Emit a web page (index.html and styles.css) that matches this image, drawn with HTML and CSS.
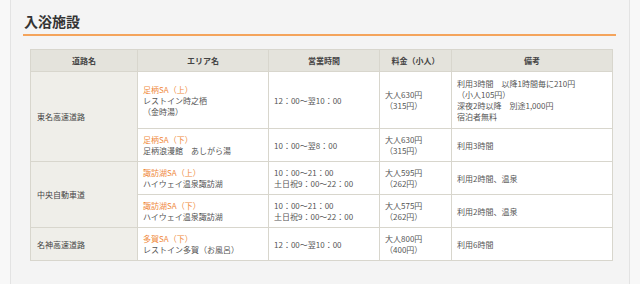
FILE: index.html
```html
<!DOCTYPE html>
<html lang="ja">
<head>
<meta charset="utf-8">
<title>入浴施設</title>
<link rel="stylesheet" href="styles.css">
</head>
<body>
<div class="page">
  <section class="panel">
    <h2 class="title">入浴施設</h2>
    <div class="table-wrap">
      <table class="bath">
        <colgroup>
          <col class="c-road">
          <col class="c-area">
          <col class="c-hours">
          <col class="c-fee">
          <col class="c-note">
        </colgroup>
        <thead>
          <tr><th>道路名</th><th>エリア名</th><th>営業時間</th><th>料金（小人）</th><th>備考</th></tr>
        </thead>
        <tbody>
          <tr class="tall">
            <th class="road" rowspan="2">東名高速道路</th>
            <td><span class="sa">足柄SA（上）</span><br>レストイン時之栖<br>（金時湯）</td>
            <td>12：00〜翌10：00</td>
            <td>大人630円<br>（315円）</td>
            <td>利用3時間　以降1時間毎に210円<br>（小人105円）<br>深夜2時以降　別途1,000円<br>宿泊者無料</td>
          </tr>
          <tr>
            <td><span class="sa">足柄SA（下）</span><br>足柄浪漫館　あしがら湯</td>
            <td>10：00〜翌8：00</td>
            <td>大人630円<br>（315円）</td>
            <td>利用3時間</td>
          </tr>
          <tr>
            <th class="road" rowspan="2">中央自動車道</th>
            <td><span class="sa">諏訪湖SA（上）</span><br>ハイウェイ温泉諏訪湖</td>
            <td>10：00〜21：00<br>土日祝9：00〜22：00</td>
            <td>大人595円<br>（262円）</td>
            <td>利用2時間、温泉</td>
          </tr>
          <tr>
            <td><span class="sa">諏訪湖SA（下）</span><br>ハイウェイ温泉諏訪湖</td>
            <td>10：00〜21：00<br>土日祝9：00〜22：00</td>
            <td>大人575円<br>（262円）</td>
            <td>利用2時間、温泉</td>
          </tr>
          <tr>
            <th class="road">名神高速道路</th>
            <td><span class="sa">多賀SA（下）</span><br>レストイン多賀（お風呂）</td>
            <td>12：00〜翌10：00</td>
            <td>大人800円<br>（400円）</td>
            <td>利用6時間</td>
          </tr>
        </tbody>
      </table>
    </div>
  </section>
</div>
</body>
</html>
```

FILE: styles.css
```css
html, body {
  margin: 0;
  padding: 0;
}

body {
  background: #f8f8f8;
  font-family: "Noto Sans CJK JP", "Liberation Sans", sans-serif;
  color: #555;
}

.page {
  min-height: 284px;
}

.panel {
  box-sizing: border-box;
  width: 620px;
  min-height: 284px;
  margin-left: 10px;
  padding: 11px 13px 24px 12px;
  background: #f4f4f4;
  border-left: 1px solid #e3e3e3;
  border-right: 1px solid #e3e3e3;
}

.title {
  margin: 0;
  padding: 0 1px 3px;
  font-size: 14px;
  line-height: 20px;
  font-weight: bold;
  color: #333;
  border-bottom: 2px solid #f4a45c;
}

.table-wrap {
  padding: 13px 4px 0 7px;
}

.bath {
  width: 582px;
  table-layout: fixed;
  border-collapse: collapse;
  background: #fff;
  font-size: 8px;
  line-height: 11px;
}

.c-road { width: 107px; }
.c-area { width: 131px; }
.c-hours { width: 111px; }
.c-fee { width: 72px; }
.c-note { width: 161px; }

.bath th,
.bath td {
  border: 1px solid #d8d6cd;
  padding: 5px 5px;
  vertical-align: middle;
  text-align: left;
  white-space: nowrap;
}

.bath thead th {
  background: #e4e3dc;
  color: #444;
  font-weight: bold;
  text-align: center;
}

.bath tbody th.road {
  background: #efeee9;
  color: #444;
  font-weight: normal;
  padding-left: 6px;
}

.bath tr.tall td {
  padding-top: 6px;
  padding-bottom: 6px;
}

.sa {
  color: #ef8a3e;
}
```
